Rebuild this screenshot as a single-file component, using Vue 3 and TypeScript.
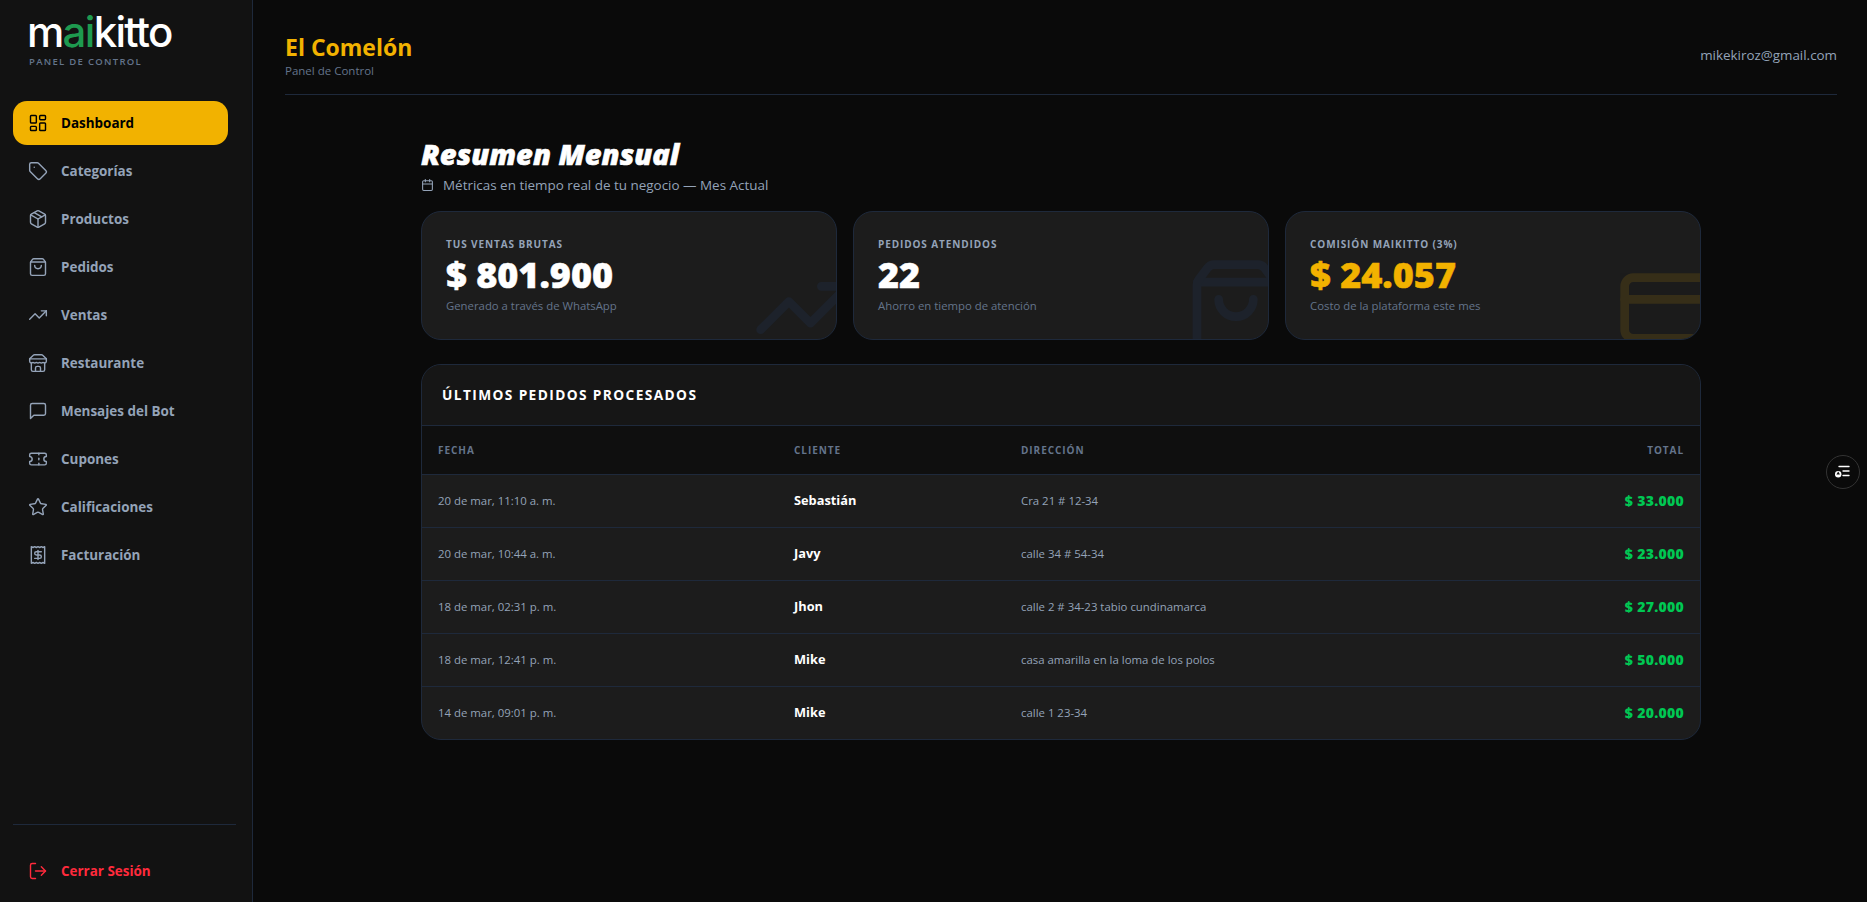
<script setup lang="ts">
interface Nav { label: string; paths: string[]; active?: boolean }
const nav: Nav[] = [
  { label: 'Dashboard', active: true, paths: ['M4 3h5a1 1 0 0 1 1 1v7a1 1 0 0 1-1 1H4a1 1 0 0 1-1-1V4a1 1 0 0 1 1-1z', 'M15 3h5a1 1 0 0 1 1 1v3a1 1 0 0 1-1 1h-5a1 1 0 0 1-1-1V4a1 1 0 0 1 1-1z', 'M15 12h5a1 1 0 0 1 1 1v7a1 1 0 0 1-1 1h-5a1 1 0 0 1-1-1v-7a1 1 0 0 1 1-1z', 'M4 16h5a1 1 0 0 1 1 1v3a1 1 0 0 1-1 1H4a1 1 0 0 1-1-1v-3a1 1 0 0 1 1-1z'] },
  { label: 'Categorías', paths: ['M12.586 2.586A2 2 0 0 0 11.172 2H4a2 2 0 0 0-2 2v7.172a2 2 0 0 0 .586 1.414l8.704 8.704a2.426 2.426 0 0 0 3.42 0l6.58-6.58a2.426 2.426 0 0 0 0-3.42z', 'M7.5 7.5h.01'] },
  { label: 'Productos', paths: ['M11 21.73a2 2 0 0 0 2 0l7-4A2 2 0 0 0 21 16V8a2 2 0 0 0-1-1.73l-7-4a2 2 0 0 0-2 0l-7 4A2 2 0 0 0 3 8v8a2 2 0 0 0 1 1.73z', 'M12 22V12', 'M3.29 7 12 12l8.71-5', 'm7.5 4.27 9 5.15'] },
  { label: 'Pedidos', paths: ['M16 10a4 4 0 0 1-8 0', 'M3.103 6.034h17.794', 'M3.4 5.467a2 2 0 0 0-.4 1.2V20a2 2 0 0 0 2 2h14a2 2 0 0 0 2-2V6.667a2 2 0 0 0-.4-1.2l-2-2.667A2 2 0 0 0 17 2H7a2 2 0 0 0-1.6.8z'] },
  { label: 'Ventas', paths: ['M16 7h6v6', 'm22 7-8.5 8.5-5-5L2 17'] },
  { label: 'Restaurante', paths: ['m2 7 4.41-4.41A2 2 0 0 1 7.83 2h8.34a2 2 0 0 1 1.42.59L22 7', 'M4 12v8a2 2 0 0 0 2 2h12a2 2 0 0 0 2-2v-8', 'M15 22v-4a2 2 0 0 0-2-2h-2a2 2 0 0 0-2 2v4', 'M2 7h20', 'M22 7v3a2 2 0 0 1-2 2a2.7 2.7 0 0 1-1.59-.63.7.7 0 0 0-.82 0A2.7 2.7 0 0 1 16 12a2.7 2.7 0 0 1-1.59-.63.7.7 0 0 0-.82 0A2.7 2.7 0 0 1 12 12a2.7 2.7 0 0 1-1.59-.63.7.7 0 0 0-.82 0A2.7 2.7 0 0 1 8 12a2.7 2.7 0 0 1-1.59-.63.7.7 0 0 0-.82 0A2.7 2.7 0 0 1 4 12a2 2 0 0 1-2-2V7'] },
  { label: 'Mensajes del Bot', paths: ['M21 15a2 2 0 0 1-2 2H7l-4 4V5a2 2 0 0 1 2-2h14a2 2 0 0 1 2 2z'] },
  { label: 'Cupones', paths: ['M2 9a3 3 0 0 1 0 6v2a2 2 0 0 0 2 2h16a2 2 0 0 0 2-2v-2a3 3 0 0 1 0-6V7a2 2 0 0 0-2-2H4a2 2 0 0 0-2 2Z', 'M13 5v2', 'M13 17v2', 'M13 11v2'] },
  { label: 'Calificaciones', paths: ['M11.525 2.295a.53.53 0 0 1 .95 0l2.31 4.679a2.123 2.123 0 0 0 1.595 1.16l5.166.756a.53.53 0 0 1 .294.904l-3.736 3.638a2.123 2.123 0 0 0-.611 1.878l.882 5.14a.53.53 0 0 1-.771.56l-4.618-2.428a2.122 2.122 0 0 0-1.973 0L6.396 21.01a.53.53 0 0 1-.77-.56l.881-5.139a2.122 2.122 0 0 0-.611-1.879L2.16 9.795a.53.53 0 0 1 .294-.906l5.165-.755a2.122 2.122 0 0 0 1.597-1.16z'] },
  { label: 'Facturación', paths: ['M4 2v20l2-1 2 1 2-1 2 1 2-1 2 1 2-1 2 1V2l-2 1-2-1-2 1-2-1-2 1-2-1-2 1Z', 'M16 8h-6a2 2 0 1 0 0 4h4a2 2 0 1 1 0 4H8', 'M12 17.5v-11'] },
]

const trend = ['M16 7h6v6', 'm22 7-8.5 8.5-5-5L2 17']
const bag = nav[3].paths
const cardIcon = ['M4 5h16a2 2 0 0 1 2 2v10a2 2 0 0 1-2 2H4a2 2 0 0 1-2-2V7a2 2 0 0 1 2-2z', 'M2 10h20']

const cards = [
  { label: 'TUS VENTAS BRUTAS', value: '$ 801.900', sub: 'Generado a través de WhatsApp', icon: trend, gold: false },
  { label: 'PEDIDOS ATENDIDOS', value: '22', sub: 'Ahorro en tiempo de atención', icon: bag, gold: false },
  { label: 'COMISIÓN MAIKITTO (3%)', value: '$ 24.057', sub: 'Costo de la plataforma este mes', icon: cardIcon, gold: true },
]

const orders = [
  { date: '20 de mar, 11:10 a. m.', client: 'Sebastián', addr: 'Cra 21 # 12-34', total: '$ 33.000' },
  { date: '20 de mar, 10:44 a. m.', client: 'Javy', addr: 'calle 34 # 54-34', total: '$ 23.000' },
  { date: '18 de mar, 02:31 p. m.', client: 'Jhon', addr: 'calle 2 # 34-23 tabio cundinamarca', total: '$ 27.000' },
  { date: '18 de mar, 12:41 p. m.', client: 'Mike', addr: 'casa amarilla en la loma de los polos', total: '$ 50.000' },
  { date: '14 de mar, 09:01 p. m.', client: 'Mike', addr: 'calle 1 23-34', total: '$ 20.000' },
]
</script>

<template>
  <div class="app">
    <aside class="sidebar">
      <div class="brand">
        <div class="logo"><span>m</span><span class="green">ai</span><span>kitto</span></div>
        <div class="brand-sub">PANEL DE CONTROL</div>
      </div>
      <nav class="nav">
        <a v-for="item in nav" :key="item.label" class="nav-item" :class="{ active: item.active }">
          <svg class="nav-icon" viewBox="0 0 24 24" fill="none" stroke="currentColor" stroke-width="2" stroke-linecap="round" stroke-linejoin="round">
            <path v-for="d in item.paths" :key="d" :d="d" />
          </svg>
          <span>{{ item.label }}</span>
        </a>
      </nav>
      <div class="side-foot">
        <a class="nav-item logout">
          <svg class="nav-icon" viewBox="0 0 24 24" fill="none" stroke="currentColor" stroke-width="2" stroke-linecap="round" stroke-linejoin="round">
            <path d="m16 17 5-5-5-5" /><path d="M21 12H9" /><path d="M9 21H5a2 2 0 0 1-2-2V5a2 2 0 0 1 2-2h4" />
          </svg>
          <span>Cerrar Sesión</span>
        </a>
      </div>
    </aside>

    <main class="main">
      <header class="topbar">
        <div>
          <h1 class="shop">El Comelón</h1>
          <p class="shop-sub">Panel de Control</p>
        </div>
        <div class="email">mikekiroz@gmail.com</div>
      </header>

      <section class="content">
        <h2 class="title">Resumen Mensual</h2>
        <p class="subtitle">
          <svg class="cal" viewBox="0 0 24 24" fill="none" stroke="currentColor" stroke-width="2" stroke-linecap="round" stroke-linejoin="round">
            <path d="M8 2v4" /><path d="M16 2v4" /><rect x="3" y="4" width="18" height="18" rx="2" /><path d="M3 10h18" />
          </svg>
          Métricas en tiempo real de tu negocio — Mes Actual
        </p>

        <div class="cards">
          <div v-for="c in cards" :key="c.label" class="card">
            <svg class="ghost" :class="{ 'ghost-gold': c.gold }" viewBox="0 0 24 24" fill="none" stroke="currentColor" stroke-width="2" stroke-linecap="round" stroke-linejoin="round">
              <path v-for="d in c.icon" :key="d" :d="d" />
            </svg>
            <div class="card-label">{{ c.label }}</div>
            <div class="card-value" :class="{ gold: c.gold }">{{ c.value }}</div>
            <div class="card-sub">{{ c.sub }}</div>
          </div>
        </div>

        <div class="panel">
          <div class="panel-head">ÚLTIMOS PEDIDOS PROCESADOS</div>
          <table class="table">
            <thead>
              <tr>
                <th class="c-date">FECHA</th>
                <th class="c-client">CLIENTE</th>
                <th>DIRECCIÓN</th>
                <th class="right">TOTAL</th>
              </tr>
            </thead>
            <tbody>
              <tr v-for="o in orders" :key="o.date">
                <td class="date">{{ o.date }}</td>
                <td class="client">{{ o.client }}</td>
                <td class="addr">{{ o.addr }}</td>
                <td class="total right">{{ o.total }}</td>
              </tr>
            </tbody>
          </table>
        </div>
      </section>
    </main>

    <button class="float" aria-label="Ajustes">
      <svg viewBox="0 0 18 18" width="18" height="18" fill="none" stroke="#fff" stroke-width="1.4" stroke-linecap="round">
        <path d="M5 3.5h10" /><path d="M9 8h6" /><path d="M9 12.5h6" />
        <circle cx="4.2" cy="11.2" r="3.2" fill="#fff" stroke="none" />
        <path d="M4.2 8.6 6 11.6H2.4z" fill="#0a0a0a" stroke="none" />
      </svg>
    </button>
  </div>
</template>

<style>
html, body { margin: 0; background: #0a0a0a; }
</style>

<style scoped>
.app {
  display: flex;
  height: 902px;
  overflow: hidden;
  background: #0a0a0a;
  font-family: "Open Sans", "Noto Sans", "Liberation Sans", sans-serif;
  color: #fff;
  position: relative;
}
.sidebar {
  width: 253px;
  flex: none;
  box-sizing: border-box;
  background: #121212;
  border-right: 1px solid #1e293b;
  display: flex;
  flex-direction: column;
  padding: 0 16px 0 13px;
}
.brand { padding: 14px 0 0 14px; height: 87px; box-sizing: border-box; }
.logo {
  font-family: "Inter", sans-serif;
  font-size: 42px;
  font-weight: 500;
  line-height: 36px;
  letter-spacing: -1.7px;
  color: #fff;
  white-space: nowrap;
  height: 36px;
}
.green { color: #1e9a4f; }
.brand-sub {
  font-size: 9.5px;
  font-weight: 600;
  letter-spacing: 1.3px;
  color: #64748b;
  margin: 5px 0 0 2px;
  line-height: 14px;
}
.nav { display: flex; flex-direction: column; gap: 4px; padding-right: 8px; padding-top: 14px; }
.nav-item {
  height: 44px;
  display: flex;
  align-items: center;
  gap: 13px;
  padding-left: 15px;
  border-radius: 14px;
  font-size: 13.45px;
  font-weight: 700;
  color: #94a3b8;
}
.nav-item.active { background: #f2b200; color: #000; }
.nav-icon { width: 20px; height: 20px; flex: none; stroke-width: 1.7; }
.side-foot { margin-top: auto; border-top: 1px solid #1e293b; padding: 24px 0 9px; }
.logout { color: #ff2a3c; }

.main { flex: 1; min-width: 0; padding: 0 30px 0 32px; }
.topbar {
  height: 95px;
  box-sizing: border-box;
  border-bottom: 1px solid #1e293b;
  display: flex;
  justify-content: space-between;
  align-items: flex-start;
  padding-top: 32px;
}
.shop { margin: 0; font-size: 23px; line-height: 30px; font-weight: 700; color: #f2b200; }
.shop-sub { margin: 1px 0 0; font-size: 11.5px; line-height: 16px; color: #64748b; }
.email { margin-top: 13px; font-size: 13.4px; line-height: 20px; color: #94a3b8; }

.content { width: 1280px; margin: 41px auto 0; }
.title {
  margin: 0;
  font-size: 29px;
  line-height: 36px;
  font-weight: 800;
  font-style: italic;
  -webkit-text-stroke: 0.6px currentColor;
  color: #fff;
}
.subtitle {
  margin: 3px 0 0;
  display: flex;
  align-items: center;
  gap: 9px;
  font-size: 13.45px;
  line-height: 20px;
  color: #94a3b8;
}
.cal { width: 13px; height: 14px; color: #94a3b8; }

.cards { display: grid; grid-template-columns: repeat(3, 1fr); gap: 16px; margin-top: 16px; }
.card {
  position: relative;
  overflow: hidden;
  box-sizing: border-box;
  height: 129px;
  padding: 25px 24px;
  background: #1c1c1c;
  border: 1px solid #1e293b;
  border-radius: 20px;
}
.ghost {
  position: absolute;
  right: -20px;
  bottom: -21px;
  width: 104px;
  height: 104px;
  color: #1e293b;
  opacity: 0.5;
}
.ghost-gold { color: #f2b200; opacity: 0.12; }
.card-label {
  font-size: 10px;
  line-height: 14px;
  font-weight: 700;
  letter-spacing: 0.9px;
  color: #94a3b8;
}
.card-value {
  font-size: 36px;
  line-height: 40px;
  font-weight: 800;
  -webkit-text-stroke: 0.5px currentColor;
  color: #fff;
  margin-top: 4px;
}
.card-value.gold { color: #f2b200; }
.card-sub { font-size: 11.35px; line-height: 16px; color: #64748b; margin-top: 3px; }

.panel {
  margin-top: 24px;
  background: #1c1c1c;
  border: 1px solid #1e293b;
  border-radius: 20px;
  overflow: hidden;
}
.panel-head {
  height: 61px;
  box-sizing: border-box;
  display: flex;
  align-items: center;
  padding: 0 0 1px 20px;
  background: #161616;
  border-bottom: 1px solid #1e293b;
  font-size: 13.7px;
  font-weight: 700;
  letter-spacing: 1.4px;
  color: #fff;
}
.table { width: 100%; border-collapse: collapse; table-layout: fixed; }
th {
  height: 48px;
  box-sizing: border-box;
  padding: 0 16px;
  text-align: left;
  background: #0f0f0f;
  font-size: 10px;
  font-weight: 700;
  letter-spacing: 0.95px;
  color: #64748b;
  border-bottom: 1px solid #1e293b;
}
.c-date { width: 356px; }
.c-client { width: 227px; }
td {
  height: 53px;
  padding: 0 16px 1px;
  box-sizing: border-box;
  font-size: 11.4px;
  color: #94a3b8;
  border-bottom: 1px solid #1e293b;
}
tbody tr:last-child td { border-bottom: 0; }
.date { color: #94a3b8; }
.client { font-size: 12.8px; font-weight: 700; color: #fff; }
.total { font-size: 14px; font-weight: 800; letter-spacing: 0.3px; color: #00c853; }
.right { text-align: right; }

.float {
  position: absolute;
  right: 7px;
  top: 455px;
  width: 34px;
  height: 34px;
  border-radius: 50%;
  background: #0a0a0a;
  border: 1px solid #333;
  padding: 0;
  display: flex;
  align-items: center;
  justify-content: center;
}
</style>
